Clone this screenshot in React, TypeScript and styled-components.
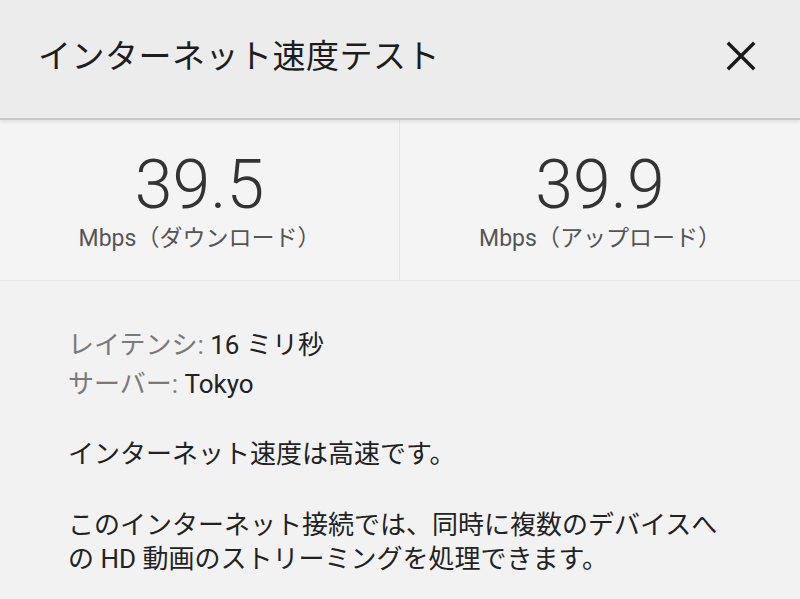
import styled, { createGlobalStyle } from 'styled-components';

const GlobalStyle = createGlobalStyle`
    html, body {
        margin: 0;
        padding: 0;
        background: #f2f2f2;
    }
    body {
        font-family: Roboto, "Noto Sans CJK JP", sans-serif;
        color: #222;
    }
`

const Page = styled.div`
    width: 800px;
    height: 599px;
    overflow: hidden;
    background: #f2f2f2;
`

const Header = styled.header`
    height: 120px;
    display: flex;
    align-items: center;
    justify-content: space-between;
    padding: 0 42px 0 38px;
    box-sizing: border-box;
    background: #ececed;
    border-bottom: 2px solid #c9c9ca;
    box-shadow: 0 2px 3px rgba(0, 0, 0, 0.08);
    position: relative;
`

const Title = styled.h1`
    margin: 0 0 11px;
    font-family: "Noto Sans CJK JP", sans-serif;
    font-weight: 400;
    font-size: 33px;
    color: #1d1d1d;
    letter-spacing: 0.5px;
`

const CloseButton = styled.button`
    border: 0;
    background: none;
    padding: 0;
    margin-bottom: 6px;
    width: 34px;
    height: 34px;
    display: flex;
    align-items: center;
    justify-content: center;
    cursor: pointer;
`

const Speeds = styled.section`
    display: grid;
    grid-template-columns: 1fr 1fr;
    height: 160px;
    background: #f4f4f4;
    border-bottom: 1px solid #e8e8e8;
`

const SpeedCell = styled.div<{ $divider?: boolean }>`
    display: flex;
    flex-direction: column;
    align-items: center;
    padding-top: 31px;
    border-right: ${p => (p.$divider ? '1px solid #e4e4e4' : 'none')};
`

const SpeedValue = styled.div`
    font-family: Roboto, sans-serif;
    font-weight: 300;
    font-size: 68px;
    line-height: 1;
    color: #333;
`

const SpeedUnit = styled.div`
    margin-top: 0;
    font-family: Roboto, "Noto Sans CJK JP", sans-serif;
    font-size: 23px;
    color: #555;
    white-space: nowrap;
`

const Body = styled.section`
    padding: 46px 0 0 68px;
    font-size: 26px;
    font-family: Roboto, "Noto Sans CJK JP", sans-serif;
`

const InfoList = styled.div`
    display: flex;
    flex-direction: column;
    gap: 2px;
    line-height: 37px;
`

const Label = styled.span`
    color: #7a7a7a;
`

const Value = styled.span`
    color: #222;
`

const Paragraph = styled.p<{ $gap?: number }>`
    margin: ${p => p.$gap ?? 32}px 0 0;
    width: 670px;
    line-height: 34px;
    color: #222;
`

const CloseIcon = () => (
    <svg width="30" height="30" viewBox="0 0 30 30">
        <path d="M3 3 L27 27 M27 3 L3 27" stroke="#1a1a1a" strokeWidth="3.4" strokeLinecap="square" />
    </svg>
)

const App = () => {
    return (
        <Page>
            <GlobalStyle />
            <Header>
                <Title>インターネット速度テスト</Title>
                <CloseButton aria-label="閉じる">
                    <CloseIcon />
                </CloseButton>
            </Header>

            <Speeds>
                <SpeedCell $divider>
                    <SpeedValue>39.5</SpeedValue>
                    <SpeedUnit>Mbps（ダウンロード）</SpeedUnit>
                </SpeedCell>
                <SpeedCell>
                    <SpeedValue>39.9</SpeedValue>
                    <SpeedUnit>Mbps（アップロード）</SpeedUnit>
                </SpeedCell>
            </Speeds>

            <Body>
                <InfoList>
                    <div>
                        <Label>レイテンシ: </Label>
                        <Value>16 ミリ秒</Value>
                    </div>
                    <div>
                        <Label>サーバー: </Label>
                        <Value>Tokyo</Value>
                    </div>
                </InfoList>
                <Paragraph $gap={34}>インターネット速度は高速です。</Paragraph>
                <Paragraph $gap={37}>このインターネット接続では、同時に複数のデバイスへの HD 動画のストリーミングを処理できます。</Paragraph>
            </Body>
        </Page>
    )
}

export default App
